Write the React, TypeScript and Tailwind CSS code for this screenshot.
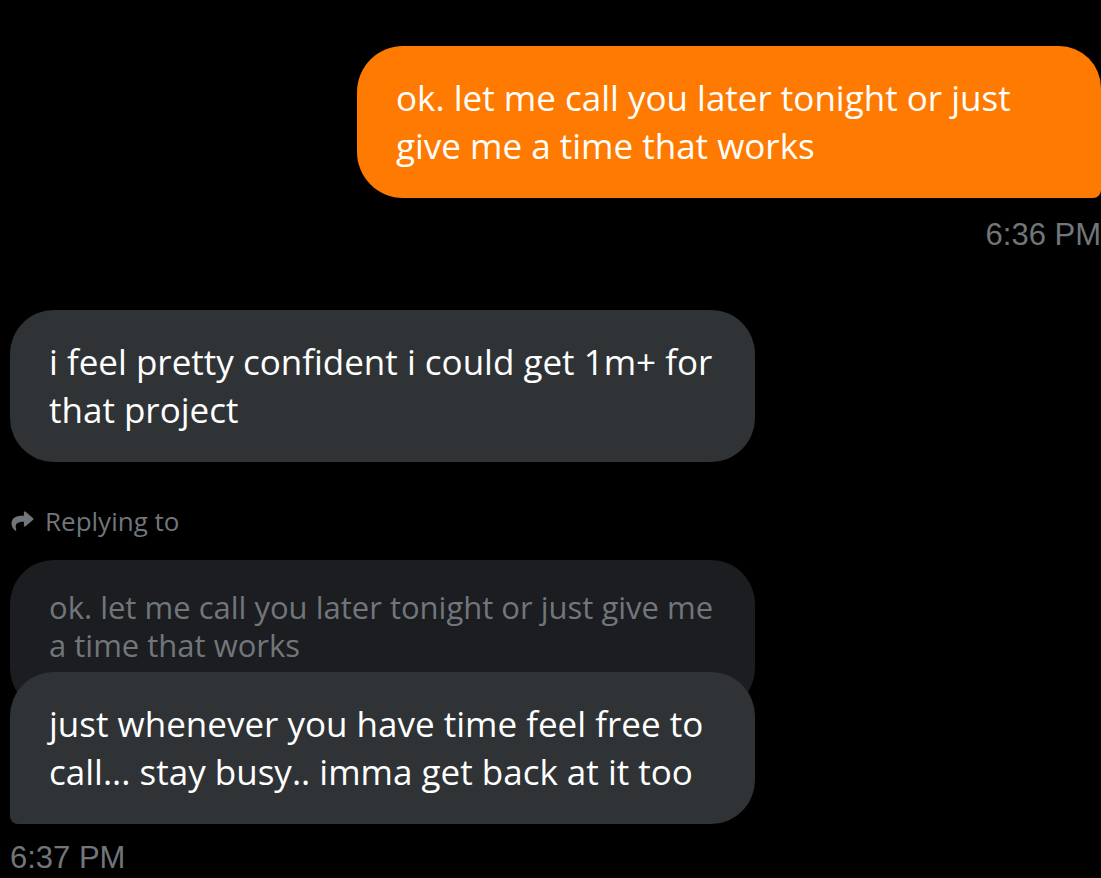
import { FaShare } from "react-icons/fa";

const body = "font-['Open_Sans',sans-serif] [font-variant-ligatures:none]";

export default function App() {
  return (
    <div className="w-[1101px] h-[878px] overflow-hidden bg-black pt-[46px]">
      {/* outgoing */}
      <div className="flex justify-end">
        <div
          className={`w-[744px] rounded-l-[46px] rounded-tr-[42px] rounded-br-[8px] bg-[#ff7a00] px-[39px] py-[28px] text-[35px] leading-[48px] text-white ${body}`}
        >
          ok. let me call you later tonight or just
          <br />
          give me a time that works
        </div>
      </div>
      <div className="mt-[19px] text-right font-['Liberation_Sans',Arial,sans-serif] text-[31px] leading-[36px] text-[#71767b]">
        6:36 PM
      </div>

      {/* incoming */}
      <div className="mt-[57px] pl-[10px]">
        <div
          className={`w-[745px] rounded-[44px] bg-[#2f3336] px-[39px] py-[28px] text-[35px] leading-[48px] text-white ${body}`}
        >
          i feel pretty confident i could get 1m+ for
          <br />
          that project
        </div>

        <div className={`mt-[44px] flex items-center gap-[10px] text-[26px] leading-[30px] text-[#71767b] ${body}`}>
          <FaShare className="h-[22px] w-[25px]" />
          <span>Replying to</span>
        </div>

        <div
          className={`mt-[24px] h-[152px] w-[745px] rounded-[44px] bg-[#1b1d20] px-[39px] pt-[28px] text-[31px] leading-[38px] text-[#71767b] ${body}`}
        >
          ok. let me call you later tonight or just give me
          <br />
          a time that works
        </div>

        <div
          className={`relative -mt-[40px] w-[745px] rounded-t-[44px] rounded-br-[44px] rounded-bl-[8px] bg-[#2f3336] px-[39px] py-[28px] text-[35px] leading-[48px] text-white ${body}`}
        >
          just whenever you have time feel free to
          <br />
          call... stay busy.. imma get back at it too
        </div>

        <div className="mt-[16px] font-['Liberation_Sans',Arial,sans-serif] text-[31px] leading-[36px] text-[#71767b]">
          6:37 PM
        </div>
      </div>
    </div>
  );
}
